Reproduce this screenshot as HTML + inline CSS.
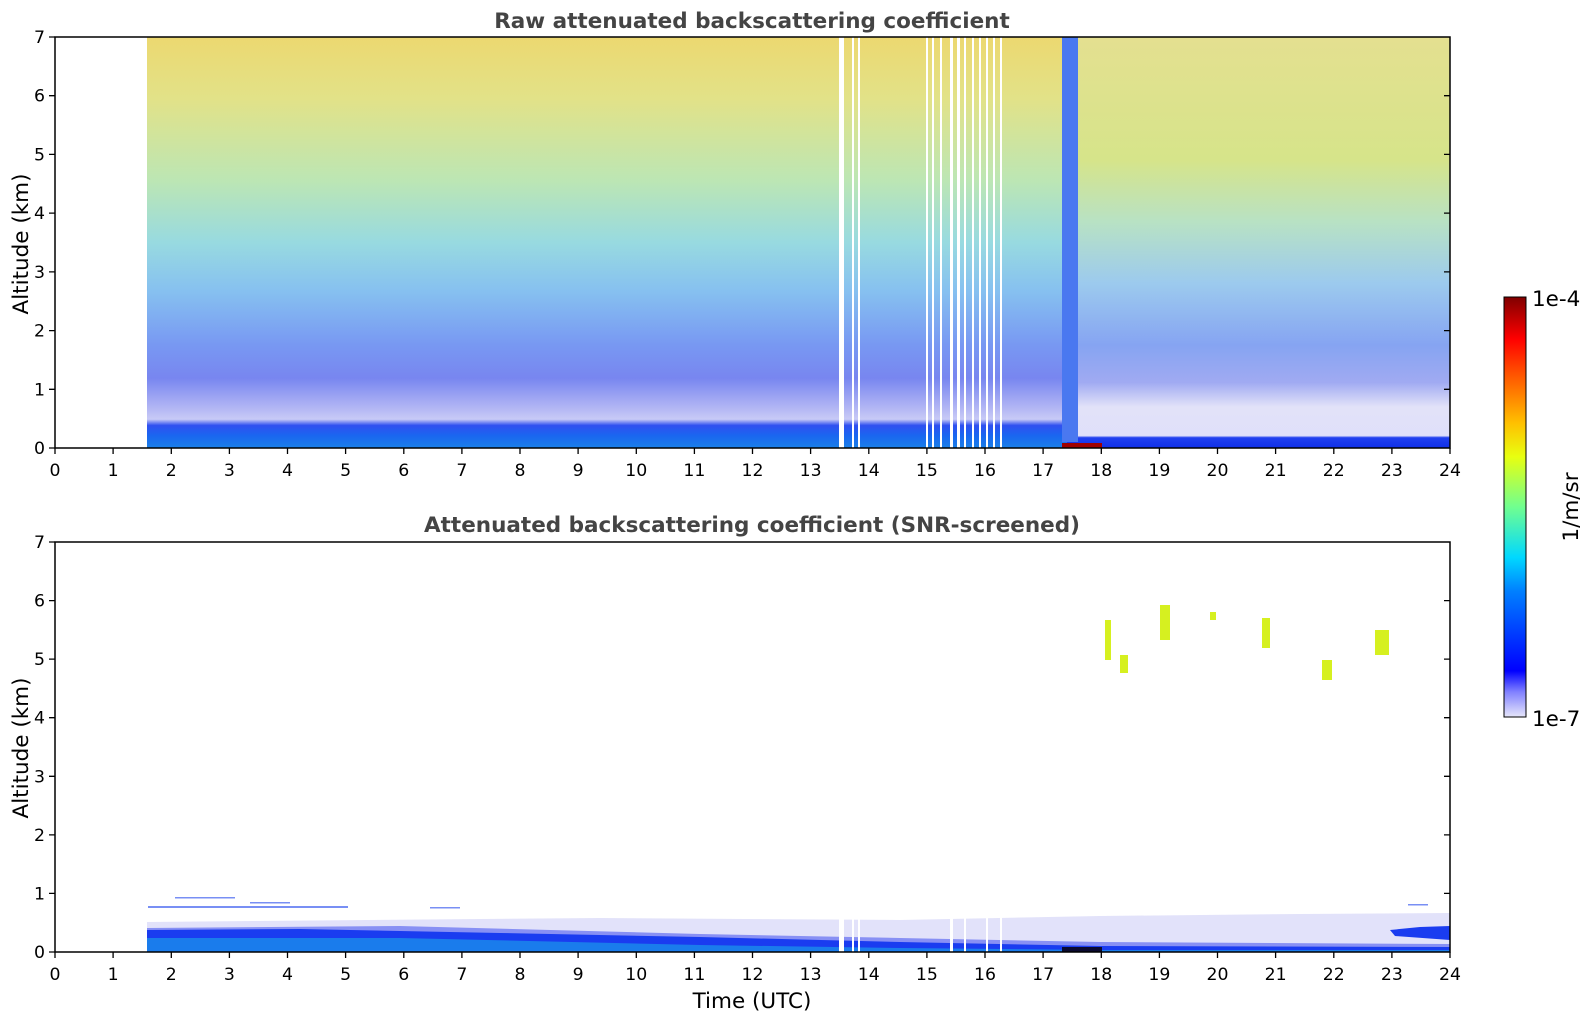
<!DOCTYPE html>
<html><head><meta charset="utf-8"><style>
html,body{margin:0;padding:0;background:#fff;}
svg{display:block;font-family:"DejaVu Sans","Liberation Sans",sans-serif;}
</style></head><body>
<svg width="1595" height="1020" viewBox="0 0 1595 1020" xmlns="http://www.w3.org/2000/svg">
<defs>
<linearGradient id="raw" x1="0" y1="0" x2="0" y2="1">
<stop offset="0" stop-color="#ecd870"/>
<stop offset="0.15" stop-color="#e2e288"/>
<stop offset="0.35" stop-color="#bce6b4"/>
<stop offset="0.5" stop-color="#98dae0"/>
<stop offset="0.62" stop-color="#86c0f0"/>
<stop offset="0.75" stop-color="#7898f2"/>
<stop offset="0.83" stop-color="#7886f0"/>
<stop offset="0.9" stop-color="#b0b4f4"/>
<stop offset="0.93" stop-color="#c8caf6"/>
<stop offset="0.945" stop-color="#3050f0"/>
<stop offset="0.97" stop-color="#1a66f0"/>
<stop offset="1" stop-color="#1a80e8"/>
</linearGradient>
<linearGradient id="rawR" x1="0" y1="0" x2="0" y2="1">
<stop offset="0" stop-color="#e4e090"/>
<stop offset="0.3" stop-color="#d6e48a"/>
<stop offset="0.45" stop-color="#b8e2c4"/>
<stop offset="0.6" stop-color="#9ccaee"/>
<stop offset="0.75" stop-color="#86a4f2"/>
<stop offset="0.84" stop-color="#a0aaf2"/>
<stop offset="0.9" stop-color="#e2e2f8"/>
<stop offset="0.97" stop-color="#e0e0fa"/>
<stop offset="0.975" stop-color="#2040f0"/>
<stop offset="1" stop-color="#1030e8"/>
</linearGradient>
<linearGradient id="cb" x1="0" y1="1" x2="0" y2="0">
<stop offset="0" stop-color="#e6e6fa"/>
<stop offset="0.06" stop-color="#8080ff"/>
<stop offset="0.11" stop-color="#0000ff"/>
<stop offset="0.3" stop-color="#0080ff"/>
<stop offset="0.38" stop-color="#00d8ff"/>
<stop offset="0.5" stop-color="#70ff90"/>
<stop offset="0.62" stop-color="#e8ff10"/>
<stop offset="0.7" stop-color="#ffc000"/>
<stop offset="0.82" stop-color="#ff5000"/>
<stop offset="0.9" stop-color="#ff0000"/>
<stop offset="1" stop-color="#800000"/>
</linearGradient>
</defs>

<!-- TOP PLOT -->
<text x="752" y="28" font-size="21.5" font-weight="bold" fill="#444" text-anchor="middle">Raw attenuated backscattering coefficient</text>
<rect x="147" y="37" width="920" height="411" fill="url(#raw)"/>
<rect x="1067" y="37" width="383" height="411" fill="url(#rawR)"/>
<rect x="1062" y="37" width="16" height="405" fill="#4a78f0"/>
<rect x="1062" y="443" width="40" height="5" fill="#a00000"/>
<g fill="#fff">
<rect x="839" y="37" width="5" height="411"/><rect x="852" y="37" width="2" height="411"/><rect x="858" y="37" width="2" height="411"/>
<rect x="926" y="37" width="2" height="411"/><rect x="932" y="37" width="2" height="411"/><rect x="940" y="37" width="2" height="411"/>
<rect x="950" y="37" width="3" height="411"/><rect x="957" y="37" width="3" height="411"/><rect x="964" y="37" width="2" height="411"/>
<rect x="972" y="37" width="2" height="411"/><rect x="979" y="37" width="2" height="411"/><rect x="986" y="37" width="2" height="411"/>
<rect x="993" y="37" width="2" height="411"/><rect x="1000" y="37" width="2" height="411"/>
</g>
<rect x="55" y="37" width="1395" height="411" fill="none" stroke="#000" stroke-width="1.5"/>

<!-- BOTTOM PLOT -->
<text x="752" y="532" font-size="21.5" font-weight="bold" fill="#444" text-anchor="middle">Attenuated backscattering coefficient (SNR-screened)</text>
<polygon points="147,922 600,918 900,920 1100,916 1300,914 1450,913 1450,952 147,952" fill="#e2e2fa"/>
<polygon points="147,928 400,926 700,934 900,938 1100,942 1450,944 1450,952 147,952" fill="#8890f4"/>
<polygon points="147,930 300,929 500,933 700,937 900,942 1100,946 1450,947 1450,952 147,952" fill="#1a3cf0"/>
<polygon points="147,938 400,938 700,945 900,948 1100,950 1450,950 1450,952 147,952" fill="#1a7cec"/>
<polygon points="1390,930 1420,927 1450,926 1450,940 1395,936" fill="#1a3cf0"/>
<rect x="1062" y="947" width="40" height="5" fill="#0a0a30"/>
<g fill="#fff"><rect x="839" y="910" width="5" height="42"/><rect x="852" y="910" width="2" height="42"/><rect x="858" y="910" width="2" height="42"/><rect x="950" y="910" width="3" height="42"/><rect x="964" y="910" width="2" height="42"/><rect x="986" y="910" width="2" height="42"/><rect x="1000" y="910" width="2" height="42"/></g>
<g fill="#4060f0" opacity="0.7">
<rect x="148" y="906" width="200" height="2"/><rect x="175" y="897" width="60" height="1.5"/><rect x="250" y="902" width="40" height="1.5"/><rect x="430" y="907" width="30" height="1.5"/><rect x="1408" y="904" width="20" height="1.5"/>
</g>
<g fill="#d6f020">
<rect x="1105" y="620" width="6" height="40"/><rect x="1120" y="655" width="8" height="18"/><rect x="1160" y="605" width="10" height="35"/><rect x="1262" y="618" width="8" height="30"/><rect x="1322" y="660" width="10" height="20"/><rect x="1375" y="630" width="14" height="25"/><rect x="1210" y="612" width="6" height="8"/>
</g>
<rect x="55" y="542" width="1395" height="410" fill="none" stroke="#000" stroke-width="1.5"/>

<g stroke="#000" stroke-width="1.3">
<path d="M55,448v6M113.1,448v6M171.3,448v6M229.4,448v6M287.5,448v6M345.6,448v6M403.8,448v6M461.9,448v6M520,448v6M578.1,448v6M636.3,448v6M694.4,448v6M752.5,448v6M810.6,448v6M868.8,448v6M926.9,448v6M985,448v6M1043.1,448v6M1101.3,448v6M1159.4,448v6M1217.5,448v6M1275.6,448v6M1333.8,448v6M1391.9,448v6M1450,448v6"/>
<path d="M55,952v6M113.1,952v6M171.3,952v6M229.4,952v6M287.5,952v6M345.6,952v6M403.8,952v6M461.9,952v6M520,952v6M578.1,952v6M636.3,952v6M694.4,952v6M752.5,952v6M810.6,952v6M868.8,952v6M926.9,952v6M985,952v6M1043.1,952v6M1101.3,952v6M1159.4,952v6M1217.5,952v6M1275.6,952v6M1333.8,952v6M1391.9,952v6M1450,952v6"/>
<path d="M55,37h-6M55,95.7h-6M55,154.4h-6M55,213.1h-6M55,271.9h-6M55,330.6h-6M55,389.3h-6M55,448h-6M1450,95.7h-6M1450,154.4h-6M1450,213.1h-6M1450,271.9h-6M1450,330.6h-6M1450,389.3h-6"/>
<path d="M55,542h-6M55,600.6h-6M55,659.1h-6M55,717.7h-6M55,776.3h-6M55,834.9h-6M55,893.4h-6M55,952h-6M1450,600.6h-6M1450,659.1h-6M1450,717.7h-6M1450,776.3h-6M1450,834.9h-6M1450,893.4h-6"/>
</g>
<g font-size="17.3" fill="#000" text-anchor="middle">
<g id="xl">
<text x="55" y="476">0</text><text x="113.1" y="476">1</text><text x="171.3" y="476">2</text><text x="229.4" y="476">3</text><text x="287.5" y="476">4</text><text x="345.6" y="476">5</text><text x="403.8" y="476">6</text><text x="461.9" y="476">7</text><text x="520" y="476">8</text><text x="578.1" y="476">9</text><text x="636.3" y="476">10</text><text x="694.4" y="476">11</text><text x="752.5" y="476">12</text><text x="810.6" y="476">13</text><text x="868.8" y="476">14</text><text x="926.9" y="476">15</text><text x="985" y="476">16</text><text x="1043.1" y="476">17</text><text x="1101.3" y="476">18</text><text x="1159.4" y="476">19</text><text x="1217.5" y="476">20</text><text x="1275.6" y="476">21</text><text x="1333.8" y="476">22</text><text x="1391.9" y="476">23</text><text x="1450" y="476">24</text>
</g>
<use href="#xl" y="504"/>
</g>
<g font-size="17.3" fill="#000" text-anchor="end">
<text x="45" y="43">7</text><text x="45" y="101.7">6</text><text x="45" y="160.4">5</text><text x="45" y="219.1">4</text><text x="45" y="277.9">3</text><text x="45" y="336.6">2</text><text x="45" y="395.3">1</text><text x="45" y="454">0</text>
<text x="45" y="548">7</text><text x="45" y="606.6">6</text><text x="45" y="665.1">5</text><text x="45" y="723.7">4</text><text x="45" y="782.3">3</text><text x="45" y="840.9">2</text><text x="45" y="899.4">1</text><text x="45" y="958">0</text>
</g>
<text transform="translate(28,244) rotate(-90)" font-size="21.5" text-anchor="middle">Altitude (km)</text>
<text transform="translate(28,748) rotate(-90)" font-size="21.5" text-anchor="middle">Altitude (km)</text>
<text x="752" y="1008" font-size="21.5" text-anchor="middle">Time (UTC)</text>

<rect x="1504" y="297" width="22" height="420" fill="url(#cb)" stroke="#000" stroke-width="1"/>
<text x="1532" y="306" font-size="21.5">1e-4</text>
<text x="1532" y="726" font-size="21.5">1e-7</text>
<text transform="translate(1578,507) rotate(-90)" font-size="21.5" text-anchor="middle">1/m/sr</text>
</svg>
</body></html>
